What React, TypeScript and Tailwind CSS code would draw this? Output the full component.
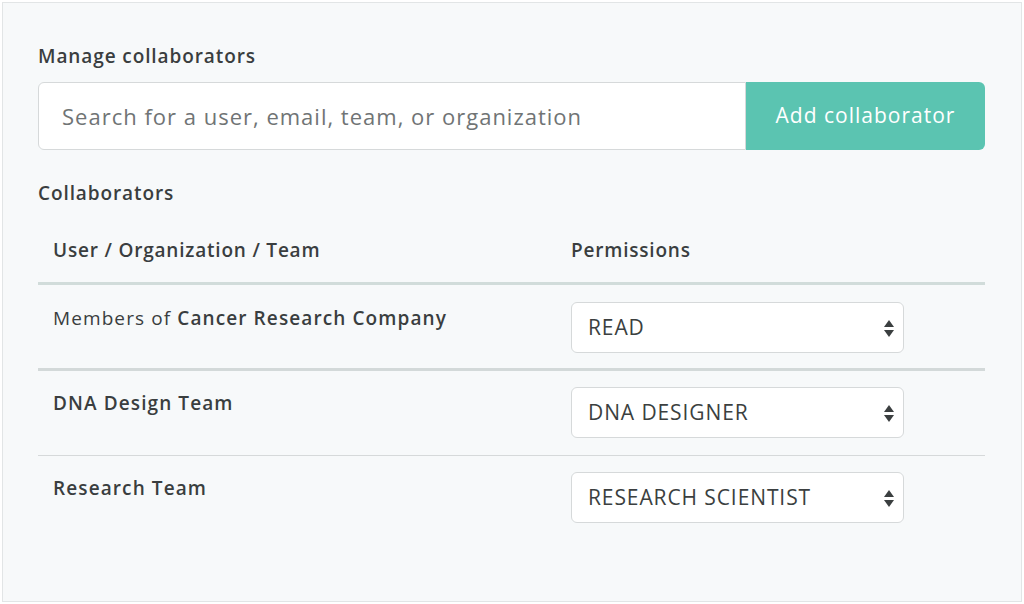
import React from "react";

const rows = [
  { name: "Cancer Research Company", prefix: "Members of ", role: "READ", kind: "thick" },
  { name: "DNA Design Team", prefix: "", role: "DNA DESIGNER", kind: "thin" },
  { name: "Research Team", prefix: "", role: "RESEARCH SCIENTIST", kind: "last" },
];

function SelectBox({ value }: { value: string }) {
  return (
    <div className="flex h-[51px] w-[333px] items-center justify-between rounded-[6px] border border-[#d6d9da] bg-white pl-[16px] pr-[8px]">
      <span className="text-[21px] tracking-[0.9px] text-[#3b3f40]">{value}</span>
      <svg width="12" height="20" viewBox="0 0 12 20">
        <path d="M6 2 L11 9 H1 Z" fill="#3b3f40" />
        <path d="M6 19 L11 12 H1 Z" fill="#3b3f40" />
      </svg>
    </div>
  );
}

export default function App() {
  return (
    <div className="h-[604px] w-[1024px] bg-white p-[2px]" style={{ fontFamily: "'Open Sans', sans-serif" }}>
      <div className="h-full w-full border border-[#e2e5e6] bg-[#f7f9fa] px-[35px] pt-[40px]">
        <h2 className="text-[19px] font-semibold leading-[26px] tracking-[0.9px] text-[#3a3e3f]">Manage collaborators</h2>
        <div className="mt-[13px] flex h-[68px] w-[947px]">
          <div className="flex flex-1 items-center rounded-l-[6px] border border-[#d6d9da] bg-white px-[23px]">
            <span className="text-[22px] tracking-[1px] text-[#707475]">Search for a user, email, team, or organization</span>
          </div>
          <button className="w-[239px] rounded-r-[6px] bg-[#5bc4b1] text-[21px] tracking-[1px] text-white">Add collaborator</button>
        </div>

        <h3 className="mt-[30px] text-[19px] font-semibold leading-[26px] tracking-[0.9px] text-[#3a3e3f]">Collaborators</h3>
        <div className="w-[947px]">
          <div className="flex items-center border-b-[3px] border-[#d1dcda] pb-[19px] pt-[31px] text-[19px] font-semibold leading-[26px] tracking-[0.8px] text-[#3a3e3f]">
            <div className="w-[533px] pl-[15px]">User / Organization / Team</div>
            <div>Permissions</div>
          </div>
          {rows.map((r) => (
            <div
              key={r.name}
              className={
                r.kind === "last"
                  ? "flex h-[84px] items-start pt-[16px]"
                  : r.kind === "thick"
                  ? "flex h-[86px] items-start border-b-[3px] border-[#d3d9d9] pt-[17px]"
                  : "flex h-[85px] items-start border-b border-[#d6d9da] pt-[16px]"
              }
            >
              <div className="w-[533px] pl-[15px] pt-[3px] text-[19px] leading-[26px] tracking-[1.1px] text-[#3a3e3f]">
                {r.prefix}
                <span className="font-semibold">{r.name}</span>
              </div>
              <SelectBox value={r.role} />
            </div>
          ))}
        </div>
      </div>
    </div>
  );
}
